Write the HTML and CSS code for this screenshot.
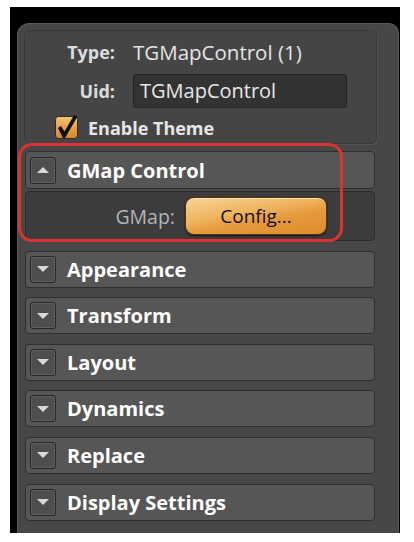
FILE: index.html
```html
<!DOCTYPE html>
<html lang="en">
<head>
    <meta charset="UTF-8">
    <meta name="viewport" content="width=device-width, initial-scale=1.0">
    <title>TGMapControl Properties</title>
    <link rel="stylesheet" href="styles.css">
</head>
<body>

    <!-- Property inspector frame -->
    <div class="frame">
        <div class="panel">

            <!-- General properties -->
            <div class="props">
                <div class="prop-row">
                    <span class="prop-label">Type:</span>
                    <span class="prop-value">TGMapControl (1)</span>
                </div>
                <div class="prop-row uid-row">
                    <span class="prop-label">Uid:</span>
                    <div class="prop-input">TGMapControl</div>
                </div>
                <div class="check-row">
                    <span class="checkbox">
                        <svg width="23" height="23" viewBox="0 0 23 23">
                            <defs>
                                <linearGradient id="boxFill" x1="0" y1="0" x2="0" y2="1">
                                    <stop offset="0" stop-color="#f6c56e"/>
                                    <stop offset="0.5" stop-color="#e9a145"/>
                                    <stop offset="1" stop-color="#d8862a"/>
                                </linearGradient>
                            </defs>
                            <rect x="0.5" y="0.5" width="22" height="22" rx="3" fill="url(#boxFill)" stroke="#2b2b2b"/>
                            <path d="M3 12 L6 10 L9.5 15.5 L19 -1 L22.5 0.5 L10 22 L8 22 Z" fill="#111"/>
                        </svg>
                    </span>
                    <span class="check-text">Enable Theme</span>
                </div>
            </div>

            <!-- Expandable sections -->
            <div class="sections">
                <div class="section">
                    <div class="section-head">
                        <span class="toggle"><span class="arrow-up"></span></span>
                        <span class="section-title">GMap Control</span>
                    </div>
                    <div class="section-body">
                        <span class="field-label">GMap:</span>
                        <button class="config-btn">Config...</button>
                    </div>
                </div>
                <div class="section-head">
                    <span class="toggle"><span class="arrow-down"></span></span>
                    <span class="section-title">Appearance</span>
                </div>
                <div class="section-head">
                    <span class="toggle"><span class="arrow-down"></span></span>
                    <span class="section-title">Transform</span>
                </div>
                <div class="section-head">
                    <span class="toggle"><span class="arrow-down"></span></span>
                    <span class="section-title">Layout</span>
                </div>
                <div class="section-head">
                    <span class="toggle"><span class="arrow-down"></span></span>
                    <span class="section-title">Dynamics</span>
                </div>
                <div class="section-head">
                    <span class="toggle"><span class="arrow-down"></span></span>
                    <span class="section-title">Replace</span>
                </div>
                <div class="section-head">
                    <span class="toggle"><span class="arrow-down"></span></span>
                    <span class="section-title">Display Settings</span>
                </div>
            </div>

            <!-- Red annotation around the GMap section -->
            <div class="highlight"></div>
        </div>
    </div>

</body>
</html>
```

FILE: styles.css
```css
/* General body style */
body {
    margin: 0;
    padding: 0;
    background-color: #fff;
    font-family: 'Open Sans', 'Noto Sans', sans-serif;
}

/* Black window frame */
.frame {
    margin: 7px 0 0 10px;
    width: 390px;
    height: 526px;
    box-sizing: border-box;
    padding: 16px 1px 0 7px;
    background-color: #000;
}

.panel {
    position: relative;
    height: 100%;
    box-sizing: border-box;
    padding: 6px 0 0 6px;
    background-color: #474747;
    border: 1px solid #5a5a5a;
    border-bottom: none;
    border-radius: 12px 10px 0 0;
}

/* Top property box */
.props {
    width: 353px;
    height: 114px;
    box-sizing: border-box;
    padding-top: 6px;
    background-color: #454545;
    border: 1px solid #393939;
    border-radius: 6px;
    box-shadow: 1px 1px 0 #525252;
}

.prop-row {
    display: flex;
    align-items: center;
    height: 30px;
}

.uid-row {
    height: 34px;
    margin-top: 7px;
}

.prop-label {
    width: 90px;
    text-align: right;
    font-size: 18px;
    font-weight: 700;
    color: #dcdcdc;
}

.prop-value {
    margin-left: 18px;
    font-size: 20.5px;
    color: #e4e4e4;
}

.prop-input {
    margin-left: 18px;
    width: 214px;
    height: 34px;
    box-sizing: border-box;
    padding-left: 6px;
    line-height: 32px;
    font-size: 20px;
    color: #e8e8e8;
    background-color: #333;
    border: 1px solid #242424;
    border-radius: 3px;
}

.check-row {
    display: flex;
    align-items: center;
    height: 23px;
    margin-top: 8px;
    padding-left: 30px;
}

.checkbox {
    display: block;
    width: 23px;
    height: 23px;
}

.checkbox svg {
    display: block;
    overflow: visible;
}

.check-text {
    margin-left: 10px;
    font-size: 18px;
    font-weight: 700;
    color: #e6e6e6;
}

/* Sections */
.sections {
    display: flex;
    flex-direction: column;
    gap: 9.6px;
    width: 350px;
    margin: 7px 0 0 1px;
}

.section-head {
    display: flex;
    align-items: center;
    height: 37px;
    box-sizing: border-box;
    background-color: #565656;
    border: 1px solid #2f2f2f;
    border-radius: 4px;
}

.section .section-head {
    height: 38px;
}

.toggle {
    display: flex;
    align-items: center;
    justify-content: center;
    width: 26px;
    height: 27px;
    margin-left: 4px;
    box-sizing: border-box;
    background-color: #4e4e4e;
    border: 1px solid #262626;
    border-radius: 3px;
    box-shadow: inset 0 0 0 1px #606060;
}

.arrow-down {
    width: 0;
    height: 0;
    border-left: 6px solid transparent;
    border-right: 6px solid transparent;
    border-top: 6px solid #d8d8d8;
}

.arrow-up {
    width: 0;
    height: 0;
    border-left: 6px solid transparent;
    border-right: 6px solid transparent;
    border-bottom: 6px solid #d8d8d8;
}

.section-title {
    margin-left: 11px;
    font-size: 20px;
    font-weight: 700;
    color: #fff;
}

.section-body {
    display: flex;
    align-items: center;
    height: 50px;
    margin-top: 2px;
    box-sizing: border-box;
    background-color: #3c3c3c;
    border: 1px solid #2c2c2c;
    border-radius: 4px;
}

.field-label {
    width: 149px;
    text-align: right;
    font-size: 19.5px;
    color: #b4b4b4;
}

.config-btn {
    margin-left: 10px;
    width: 142px;
    height: 38px;
    font-family: inherit;
    font-size: 19px;
    color: #111;
    background: linear-gradient(170deg, #f8d595 0%, #eeb35f 40%, #e69a3c 60%, #dd8d2d 100%);
    border: 1px solid #553410;
    border-radius: 9px;
    box-shadow: 0 1px 2px rgba(0, 0, 0, 0.7), inset 0 1px 0 #fbe2b0;
}

/* Annotation ring */
.highlight {
    position: absolute;
    left: 0;
    top: 119px;
    width: 325px;
    height: 99px;
    box-sizing: border-box;
    border: 3px solid #db3232;
    border-radius: 14px;
}
```
